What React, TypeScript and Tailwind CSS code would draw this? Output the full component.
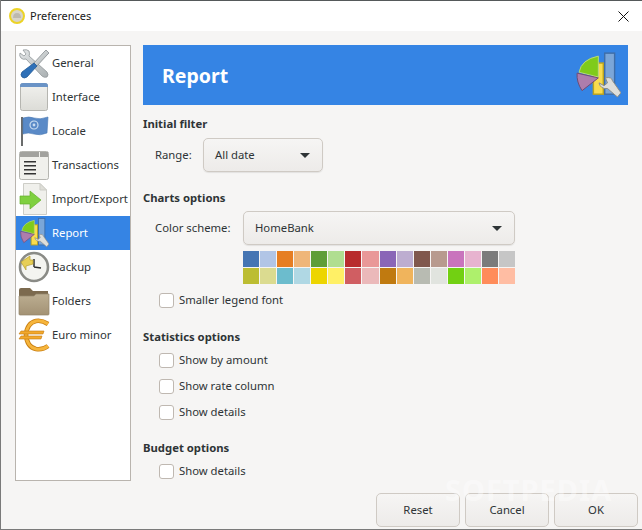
import * as React from "react";

const font = { fontFamily: '"Noto Sans", sans-serif' };

function GeneralIcon() {
  return (
    <svg width="36" height="34" viewBox="0 0 36 34">
      <defs>
        <linearGradient id="metal" x1="0" y1="0" x2="1" y2="1">
          <stop offset="0" stopColor="#e4e7e8" />
          <stop offset="1" stopColor="#aab0b2" />
        </linearGradient>
      </defs>
      <path d="M7 4 Q11 3 13 5 Q14 8 13 10 L31 26 Q33 29 31 31 Q28 32 26 30 L10 13 Q7 14 5 12 Q3 10 4 7 L8 10 L10 8 Z" fill="url(#metal)" stroke="#8f9698" strokeWidth="0.8" />
      <path d="M30 4 L33 7 L31 9 L20 21 L17 18 L28 6 Z" fill="url(#metal)" stroke="#858c8f" strokeWidth="0.8" />
      <path d="M18 17 L21 20 L11 31 Q8 33 6 31 Q4 29 6 26 Z" fill="#2e70b8" stroke="#235a96" strokeWidth="0.8" />
    </svg>
  );
}

function InterfaceIcon() {
  return (
    <svg width="36" height="34" viewBox="0 0 36 34">
      <defs>
        <linearGradient id="pane" x1="0" y1="0" x2="0" y2="1">
          <stop offset="0" stopColor="#f1f1ee" />
          <stop offset="1" stopColor="#dcdcd7" />
        </linearGradient>
      </defs>
      <rect x="4.5" y="3.5" width="27" height="27" rx="2" fill="url(#pane)" stroke="#b5b5b0" />
      <path d="M4 6 Q4 3 7 3 L29 3 Q32 3 32 6 L32 7 L4 7 Z" fill="#6a93c6" />
    </svg>
  );
}

function LocaleIcon() {
  return (
    <svg width="36" height="34" viewBox="0 0 36 34">
      <rect x="5" y="3" width="2" height="29" fill="#6a6c6c" />
      <path d="M7 4 Q13 2 18 4 Q24 6 32 3 L31 19 Q24 22 18 20 Q12 18 7 20 Z" fill="#5a8ac7" stroke="#4a79b3" strokeWidth="0.6" />
      <circle cx="18" cy="11" r="4" fill="none" stroke="#c9dcf0" strokeWidth="1.2" />
      <circle cx="18" cy="11" r="1.4" fill="#c9dcf0" />
    </svg>
  );
}

function TransactionsIcon() {
  return (
    <svg width="36" height="34" viewBox="0 0 36 34">
      <rect x="3.5" y="3.5" width="29" height="28" rx="2" fill="#f0f0ec" stroke="#b5b5b0" />
      <rect x="4" y="4" width="19" height="5" fill="#a2a29e" />
      <rect x="24" y="4" width="8" height="5" fill="#a2a29e" />
      <rect x="8" y="13" width="12" height="1.5" fill="#333" />
      <rect x="8" y="17" width="12" height="1.5" fill="#333" />
      <rect x="8" y="21" width="12" height="1.5" fill="#333" />
      <rect x="8" y="25" width="12" height="1.5" fill="#333" />
    </svg>
  );
}

function ImportIcon() {
  return (
    <svg width="36" height="34" viewBox="0 0 36 34">
      <path d="M7.5 1.5 L24 1.5 L30.5 8 L30.5 32.5 L7.5 32.5 Z" fill="#f0f0ec" stroke="#cdcdc7" />
      <path d="M24 1.5 L24 8 L30.5 8 Z" fill="#deded8" stroke="#cdcdc7" />
      <path d="M4 14 L14 14 L14 9 L25 18 L14 27 L14 22 L4 22 Z" fill="#7fd040" stroke="#66b02c" strokeWidth="0.7" />
    </svg>
  );
}

function ReportIcon({ size = 33 }: { size?: number }) {
  return (
    <svg width={size} height={size * (34 / 36)} viewBox="0 0 36 34">
      <rect x="24.5" y="1.5" width="7" height="29" fill="#7ba6d8" stroke="#3f6ea8" />
      <rect x="16.5" y="8.5" width="7" height="22" fill="#f9dc4e" stroke="#b9a21f" />
      <path d="M20 3.6 L20 18.4 L6.4 15 Q8 6 20 3.6 Z" fill="#7fcb1b" stroke="#b7d97e" strokeWidth="0.7" />
      <path d="M5 15.6 L20 19 L8.5 28 Q4.5 22 5 15.6 Z" fill="#ae7dac" stroke="#6f4b73" strokeWidth="0.7" />
      <path d="M25 19 Q29.5 18 30 21 L36 29.5 L33.5 32.5 L26.5 26.5 Q21.5 27 20.5 22.5 L24 24.5 L26.5 22.5 Z" fill="#dededa" stroke="#8b8d88" strokeWidth="0.7" />
    </svg>
  );
}

function BackupIcon() {
  return (
    <svg width="36" height="34" viewBox="0 0 36 34">
      <circle cx="18" cy="17" r="14" fill="#f4f4f0" stroke="#8a8b86" strokeWidth="2.6" />
      <path d="M18 17 L18 9 M18 17 L25 18" stroke="#2e2e2e" strokeWidth="1.5" fill="none" />
      <path d="M5 12 L14 6 L14 10 L17 10 L17 14 L10 16 L10 20 Z" fill="#e8cf56" stroke="#b89f2c" strokeWidth="0.7" />
    </svg>
  );
}

function FoldersIcon() {
  return (
    <svg width="36" height="34" viewBox="0 0 36 34">
      <defs>
        <linearGradient id="folder" x1="0" y1="0" x2="0" y2="1">
          <stop offset="0" stopColor="#bcae92" />
          <stop offset="1" stopColor="#a39274" />
        </linearGradient>
      </defs>
      <path d="M3 6 Q3 4 5 4 L14 4 L17 7 L32 7 L32 13 L3 13 Z" fill="#7c6a4f" />
      <path d="M3 12 L18 12 L20 10 L33 10 L33 30 Q33 31 32 31 L4 31 Q3 31 3 30 Z" fill="url(#folder)" stroke="#94846a" strokeWidth="0.7" />
    </svg>
  );
}

function EuroIcon() {
  return (
    <svg width="36" height="34" viewBox="0 0 36 34">
      <path d="M32 6 Q26 2 20 3 Q11 5 10 17 Q11 29 20 31 Q27 32 32 28" fill="none" stroke="#c97f12" strokeWidth="4.6" />
      <path d="M32 6 Q26 2 20 3 Q11 5 10 17 Q11 29 20 31 Q27 32 32 28" fill="none" stroke="#f6b53c" strokeWidth="3" />
      <path d="M5 13 L28 13 L27 16 L3 16 Z M5 18 L26 18 L25 21 L3 21 Z" fill="#f3a92c" stroke="#c47a10" strokeWidth="0.6" />
    </svg>
  );
}

function AppIcon() {
  return (
    <svg width="16" height="16" viewBox="0 0 16 16">
      <circle cx="8" cy="8" r="7" fill="#d8d4c8" stroke="#ecd326" strokeWidth="2" />
      <path d="M4 10 Q4 5 8 5 Q12 5 12 10 Z" fill="#bdb9ae" />
    </svg>
  );
}

const menu = [
  { label: "General", icon: <GeneralIcon /> },
  { label: "Interface", icon: <InterfaceIcon /> },
  { label: "Locale", icon: <LocaleIcon /> },
  { label: "Transactions", icon: <TransactionsIcon /> },
  { label: "Import/Export", icon: <ImportIcon /> },
  { label: "Report", icon: <ReportIcon />, active: true },
  { label: "Backup", icon: <BackupIcon /> },
  { label: "Folders", icon: <FoldersIcon /> },
  { label: "Euro minor", icon: <EuroIcon /> },
];

const swatches = [
  "#4575b3", "#b1c5e6", "#e67e22", "#efb679", "#5f9e38", "#b0de90", "#b82c2d", "#e99898",
  "#8a66b7", "#bdadd0", "#80584d", "#b89a8e", "#c974bd", "#e7b3cf", "#7b7b7b", "#c6c6c6",
  "#bcbd32", "#dbdb90", "#6cbccd", "#b0d8e4", "#edd500", "#fff066", "#d05e62", "#ebb9ba",
  "#c07a10", "#f0b45c", "#b8bbb2", "#e1e4df", "#72d012", "#aef06c", "#ff8c5a", "#ffbda3",
];

function Caret() {
  return <span className="w-0 h-0 border-x-[5px] border-x-transparent border-t-[5px] border-t-[#2e3436]" />;
}

function Combo({ label, className }: { label: string; className: string }) {
  return (
    <div className={`h-[34px] flex items-center justify-between pl-[11px] pr-3 border border-[#cfcac4] rounded-[5px] bg-gradient-to-b from-[#f6f5f4] to-[#edebe9] shadow-[0_1px_1px_rgba(0,0,0,0.08)] text-[#2e3436] ${className}`}>
      <span>{label}</span>
      <Caret />
    </div>
  );
}

function Check({ label }: { label: string }) {
  return (
    <div className="h-4 flex items-center gap-[5px] text-[#2e3436]">
      <span className="w-[15px] h-[15px] border border-[#bfb8b1] rounded-[3px] bg-white" />
      <span>{label}</span>
    </div>
  );
}

function Btn({ label }: { label: string }) {
  return (
    <div className="w-[84px] h-[34px] flex items-center justify-center border border-[#cfcac4] rounded-[5px] bg-gradient-to-b from-[#f6f5f4] to-[#edebe9] text-[#2e3436]">
      {label}
    </div>
  );
}

export default function App() {
  return (
    <div style={font} className="relative w-[642px] h-[530px] flex flex-col overflow-hidden text-[11.3px] leading-4 bg-[#f6f5f4] border-l border-b border-[#7a7a7a]">
      {/* barra de titulo */}
      <div className="h-[31px] shrink-0 flex items-center pl-2 pr-[13px] bg-white border-t border-[#55595a]">
        <AppIcon />
        <span className="ml-[5px] text-[11px] text-[#1a1a1a]">Preferences</span>
        <svg className="ml-auto" width="11" height="11" viewBox="0 0 11 11">
          <path d="M0.5 0.5 L10.5 10.5 M10.5 0.5 L0.5 10.5" stroke="#111" strokeWidth="1" />
        </svg>
      </div>

      <div className="flex-1 flex gap-3 pl-[14px] pr-[14px] pt-[14px]">
        {/* lista lateral */}
        <div className="w-[116px] h-[436px] shrink-0 border border-[#b9b4ae] bg-white">
          {menu.map((m) => (
            <div key={m.label} className={`h-[34px] flex items-center ${m.active ? "bg-[#3584e4] text-white" : "text-[#2e3436]"}`}>
              <span className="w-9 h-[34px] shrink-0 flex items-center">{m.icon}</span>
              <span>{m.label}</span>
            </div>
          ))}
        </div>

        {/* painel direito */}
        <div className="flex-1 flex flex-col">
          <div className="h-[60px] shrink-0 flex items-center justify-between pl-[19px] pr-[7px] bg-[#3584e4]">
            <span className="text-[19.5px] leading-6 pt-[2px] font-bold text-white">Report</span>
            <ReportIcon size={51} />
          </div>

          <div className="mt-[11px] font-bold text-[#2e3436]">Initial filter</div>
          <div className="mt-[6px] flex items-center pl-3">
            <span className="w-[48px] text-[#2e3436]">Range:</span>
            <Combo label="All date" className="w-[120px]" />
          </div>

          <div className="mt-[18px] font-bold text-[#2e3436]">Charts options</div>
          <div className="mt-[5px] flex items-center pl-3">
            <span className="w-[88px] text-[#2e3436]">Color scheme:</span>
            <Combo label="HomeBank" className="w-[272px]" />
          </div>
          <div className="mt-[6px] ml-[100px] w-[272px] grid grid-cols-16 gap-px">
            {swatches.map((c, i) => (
              <span key={i} className="h-4" style={{ backgroundColor: c }} />
            ))}
          </div>
          <div className="mt-[8px] pl-4">
            <Check label="Smaller legend font" />
          </div>

          <div className="mt-[21px] font-bold text-[#2e3436]">Statistics options</div>
          <div className="mt-[7px] pl-4 flex flex-col gap-[10px]">
            <Check label="Show by amount" />
            <Check label="Show rate column" />
            <Check label="Show details" />
          </div>

          <div className="mt-[20px] font-bold text-[#2e3436]">Budget options</div>
          <div className="mt-[7px] pl-4">
            <Check label="Show details" />
          </div>
        </div>
      </div>

      {/* botoes */}
      <div className="shrink-0 flex justify-end gap-[5px] pr-[4px] pb-[2px]">
        <Btn label="Reset" />
        <Btn label="Cancel" />
        <Btn label="OK" />
      </div>

      {/* marca d'agua */}
      <span className="absolute left-[444px] top-[474px] text-[29px] leading-8 font-bold tracking-[1px] text-white/40 pointer-events-none">
        SOFTPEDIA
      </span>
    </div>
  );
}
